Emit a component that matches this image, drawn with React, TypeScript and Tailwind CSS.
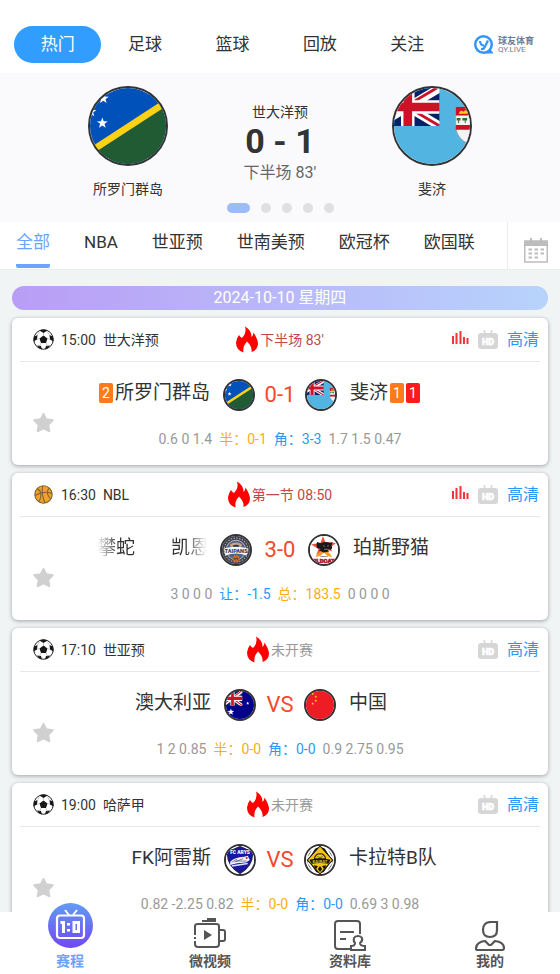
import { ReactNode, useState } from "react";
import clsx from "clsx";

interface Match {
    id: number;
    sport: "football" | "basketball";
    time: string;
    league: string;
    status: string;
    live: boolean;
    home: ReactNode;
    homeLogo: ReactNode;
    away: ReactNode;
    awayLogo: ReactNode;
    score: string;
    scoreWidth: string;
    odds: { text: string; color: string }[];
}

const GREY = "text-[#999]";
const ORANGE = "text-[#faad14]";
const BLUE = "text-[#2b98f5]";

function starPoints(cx: number, cy: number, r: number): string {
    return Array.from({ length: 10 }, (_, i) => {
        const radius = i % 2 === 0 ? r : r * 0.4;
        const angle = (Math.PI / 5) * i - Math.PI / 2;
        return `${(cx + radius * Math.cos(angle)).toFixed(2)},${(cy + radius * Math.sin(angle)).toFixed(2)}`;
    }).join(" ");
}

function UnionJack({ x, width, height }: { x: number; width: number; height: number }) {
    return (
        <svg x={x} y={0} width={width} height={height} viewBox="0 0 66 40" preserveAspectRatio="none">
            <rect width="66" height="40" fill="#012169" />
            <path d="M0 0L66 40M66 0L0 40" stroke="#fff" strokeWidth="9" />
            <path d="M0 2L30 20M33 18L63 0M36 22L66 40M0 38L30 20" stroke="#ce1126" strokeWidth="3" />
            <path d="M33 0V40M0 20H66" stroke="#fff" strokeWidth="14" />
            <path d="M33 0V40M0 20H66" stroke="#ce1126" strokeWidth="9" />
        </svg>
    );
}

function SolomonFlag() {
    return (
        <svg viewBox="0 0 80 80" className="size-full">
            <rect width="80" height="80" fill="#0051ba" />
            <path d="M0 66L80 16V80H0Z" fill="#215b33" />
            <path d="M0 67L80 15" stroke="#fcd116" strokeWidth="7" />
            <polygon points={starPoints(13, 37, 6)} fill="#fff" />
            <polygon points={starPoints(14, 11, 6)} fill="#fff" />
            <polygon points={starPoints(1, 25, 6)} fill="#fff" />
        </svg>
    );
}

function FijiFlag() {
    return (
        <svg viewBox="0 0 80 80" className="size-full">
            <rect width="80" height="80" fill="#52b5e1" />
            <UnionJack x={-19} width={67} height={40} />
            <path d="M65 20H92V42Q90 54 79 59Q67 54 65 42Z" fill="#f4f4f4" stroke="#999" strokeWidth="0.6" />
            <path d="M65 20H92V29H65Z" fill="#ce1126" />
            <path d="M65 39H92V44H65Z" fill="#ce1126" />
            <path d="M68 27Q70 22 73 25Q76 21 78 27Z" fill="#fcd116" />
            <path d="M66 33H70M72 33H77" stroke="#2d6b35" strokeWidth="2.6" />
            <path d="M68 34V37M75 34V37" stroke="#61482a" strokeWidth="1" />
        </svg>
    );
}

function AustraliaFlag() {
    return (
        <svg viewBox="0 0 80 80" className="size-full">
            <rect width="80" height="80" fill="#00008b" />
            <UnionJack x={-10} width={57} height={42} />
            <polygon points={starPoints(14, 60, 10)} fill="#fff" />
            <polygon points={starPoints(62, 35, 5)} fill="#fff" />
        </svg>
    );
}

function ChinaFlag() {
    return (
        <svg viewBox="0 0 80 80" className="size-full">
            <rect width="80" height="80" fill="#ee1c25" />
            <polygon points={starPoints(19, 8, 4)} fill="#ff0" />
            <polygon points={starPoints(28, 16, 4)} fill="#ff0" />
            <polygon points={starPoints(28, 28, 4)} fill="#ff0" />
            <polygon points={starPoints(19, 36, 4)} fill="#ff0" />
        </svg>
    );
}

function TaipansCrest() {
    return (
        <svg viewBox="0 0 80 80" className="size-full">
            <rect width="80" height="80" fill="#41414e" />
            <circle cx="40" cy="40" r="34" fill="none" stroke="#b9b3ac" strokeWidth="3" strokeDasharray="4 4" />
            <circle cx="40" cy="40" r="28" fill="#50638c" stroke="#e6e2dd" strokeWidth="2" />
            <path d="M22 25Q40 12 58 25L53 34Q40 23 27 34Z" fill="#c9a67c" />
            <path d="M30 28Q40 22 50 28L44 33H36Z" fill="#2b2f45" />
            <path d="M5 36Q40 26 75 36L70 56Q40 44 10 56Z" fill="#f8f6f4" />
            <text x="40" y="48" textAnchor="middle" fontSize="16" fontWeight="900" fill="#3f4157" fontFamily="Roboto, sans-serif">TAIPANS</text>
            <circle cx="40" cy="65" r="10" fill="#ee8427" />
            <path d="M30 65H50M40 55V75M33 58Q40 65 33 72M47 58Q40 65 47 72" stroke="#4a3025" strokeWidth="1.8" fill="none" />
        </svg>
    );
}

function WildcatsCrest() {
    return (
        <svg viewBox="0 0 80 80" className="size-full">
            <rect width="80" height="80" fill="#fff" />
            <path d="M37 0L44 17L74 20L57 34L64 44L42 37L18 55L24 37L3 24L30 19Z" fill="#ee5340" />
            <path d="M16 60Q24 44 39 39Q55 43 63 60L50 57L40 47L29 57Z" fill="#f59a28" />
            <path d="M20 17L31 21Q43 14 56 19L65 18L61 27Q66 33 60 39L49 37L55 44L39 47L25 41L31 37L20 34Q17 26 20 17Z" fill="#191919" />
            <path d="M37 28L42 29M49 29L54 28M40 38H50" stroke="#ddd" strokeWidth="1.4" />
            <text x="40" y="60" textAnchor="middle" fontSize="7" fontWeight="700" fill="#222" fontFamily="Roboto, sans-serif">PERTH</text>
            <text x="40" y="76" textAnchor="middle" fontSize="17" fontWeight="900" fill="#17171a" stroke="#b9202c" strokeWidth="1.6" fontFamily="Roboto, sans-serif">WILDCATS</text>
        </svg>
    );
}

function ArysCrest() {
    return (
        <svg viewBox="0 0 80 80" className="size-full">
            <rect width="80" height="80" fill="#fff" />
            <path d="M5 14Q22 12 40 2Q58 12 75 14Q80 54 40 78Q0 54 5 14Z" fill="#1717a5" stroke="#20205c" strokeWidth="4" />
            <text x="40" y="24" textAnchor="middle" fontSize="14" fontWeight="900" fill="#fff" fontFamily="Roboto, sans-serif">FC ARYS</text>
            <path d="M12 45Q24 32 52 31L62 28L68 40L57 47L32 49L12 54Z" fill="#f7f7fb" />
            <path d="M16 47L32 37M24 46L49 36M28 43H59" stroke="#474767" strokeWidth="2" />
            <circle cx="59" cy="34" r="3" fill="#dc2433" />
            <path d="M16 55L62 48V52L18 59Z" fill="#dfe2f4" />
        </svg>
    );
}

function KairatCrest() {
    return (
        <svg viewBox="0 0 80 80" className="size-full">
            <rect width="80" height="80" fill="#fff" />
            <circle cx="40" cy="40" r="36" fill="#17150e" />
            <path d="M4 38L26 2M76 38L54 2M6 46L27 77M74 46L53 77" stroke="#fff" strokeWidth="6" />
            <path d="M40 0L76 40L40 80L4 40Z" fill="#f3c51b" stroke="#191710" strokeWidth="3" />
            <path d="M24 37Q26 22 40 22Q54 22 56 37Z" fill="#f3c51b" stroke="#1b180d" strokeWidth="3" />
            <path d="M33 29L37 33M47 29L43 33M36 37L40 32L44 37" stroke="#1b180d" strokeWidth="2" fill="none" />
            <path d="M10 39Q40 33 70 39L64 51Q40 46 16 51Z" fill="#17150e" />
            <text x="40" y="49" textAnchor="middle" fontSize="12" fontWeight="900" fill="#d9b42b" fontFamily="Roboto, sans-serif">KAIRAT</text>
            <path d="M22 55L34 57L28 67ZM58 55L46 57L52 67ZM40 57L46 66L40 74L34 66Z" fill="#17150e" />
        </svg>
    );
}

function FootballIcon() {
    return (
        <svg viewBox="0 0 42 42" className="size-[21px]">
            <circle cx="21" cy="21" r="19.5" fill="#fff" stroke="#222" strokeWidth="2" />
            <path d="M21 13L29 19L26 28H16L13 19Z" fill="#171717" />
            <path d="M13 3Q21-1 29 3L21 8ZM2 15L9 12L8 21L1 25ZM40 15L33 12L34 21L41 25ZM8 33L16 34L18 41Q11 39 8 33ZM34 33L26 34L24 41Q31 39 34 33Z" fill="#171717" />
            <path d="M21 8V13M8 21L13 19M34 21L29 19M16 28L13 35M26 28L29 35M9 12L14 5M33 12L28 5" stroke="#999" strokeWidth="1" />
        </svg>
    );
}

function BasketballIcon() {
    return (
        <svg viewBox="0 0 36 36" className="mx-px size-[19px]" fill="none" stroke="#7a6237" strokeWidth="2">
            <circle cx="18" cy="18" r="16.5" fill="#f0a127" />
            <path d="M2 20Q18 10 34 16M16 2Q14 20 21 34M6 7Q18 12 10 31M29 6Q20 14 32 27" />
        </svg>
    );
}

function FlameIcon() {
    return (
        <svg viewBox="0 0 44 54" className="h-[27px] w-[22px]" fill="#f00">
            <path d="M18 1Q31 8 31 22Q35 19 35 13Q44 27 44 36Q43 48 31 52Q33 42 22 31Q13 40 15 53Q0 48 0 33Q1 24 6 18Q8 22 12 24Q22 14 18 1Z" />
        </svg>
    );
}

function StarIcon() {
    return (
        <svg viewBox="0 0 40 40" className="size-[21px]" fill="#d0d0d0" stroke="#d0d0d0" strokeWidth="3" strokeLinejoin="round">
            <path d="M20 3L25.5 13.5L38 15.5L29.5 24.5L31.5 37L20 31.5L8.5 37L10.5 24.5L2 15.5L14.5 13.5Z" />
        </svg>
    );
}

function BarsIcon() {
    return (
        <svg viewBox="0 0 18 18" className="size-[18px]">
            <rect width="18" height="18" fill="#f8f9fb" />
            <path d="M2 5V13M5.5 2V13M9.500 0V13M13 6V13M16.500 7V13" stroke="#f5333b" strokeWidth="2" />
        </svg>
    );
}

function HdIcon() {
    return (
        <svg viewBox="0 0 20 20" className="size-5">
            <path d="M6 0L7 4M14 0L13 4" stroke="#d6d6d6" strokeWidth="1.5" />
            <rect y="3" width="20" height="16" rx="3" fill="#d6d6d6" />
            <text x="10" y="14.5" textAnchor="middle" fontSize="9" fontWeight="900" fill="#fff" stroke="#fff" strokeWidth="0.6" fontFamily="Roboto, sans-serif">HD</text>
        </svg>
    );
}

function CalendarIcon() {
    return (
        <svg viewBox="0 0 24 25" className="h-[25px] w-6" fill="none" stroke="#bdbdbd">
            <rect x="0.75" y="3" width="22.5" height="21" strokeWidth="1.5" />
            <path d="M0 5.5H24" strokeWidth="5" />
            <path d="M7 0V4M17 0V4" strokeWidth="2" />
            <path d="M4.5 11.5H8M10.5 11.5H14M16.5 11.5H20M4.5 15.5H8M10.5 15.5H14M16.5 15.5H20M4.5 19.5H8M10.5 19.5H14" strokeWidth="1.8" />
        </svg>
    );
}

function BrandMark() {
    return (
        <svg viewBox="0 0 40 40" className="size-5" fill="none">
            <circle cx="19" cy="19" r="16.5" stroke="#3196fb" strokeWidth="5" />
            <path d="M19 37H39L33 28Q29 35 19 35Z" fill="#3196fb" />
            <path d="M12 12Q13 21 20 21M28 11L21 25Q19 29 14 28" stroke="#3196fb" strokeWidth="4.5" />
        </svg>
    );
}

function ScheduleIcon() {
    return (
        <svg viewBox="0 0 45 45" className="size-[45px]">
            <defs>
                <linearGradient id="schedule" x1="0" y1="0" x2="0" y2="1">
                    <stop offset="0" stopColor="#629cf3" />
                    <stop offset="1" stopColor="#7147f2" />
                </linearGradient>
            </defs>
            <circle cx="22.5" cy="22.5" r="22.5" fill="url(#schedule)" />
            <path d="M17 7L21 12M29 7L25 12" stroke="#fff" strokeWidth="2" />
            <rect x="9" y="12.5" width="27" height="22.5" rx="3" fill="none" stroke="#fff" strokeWidth="2.2" />
            <path d="M12.5 19.5H15.5V30M20.5 20V22.500M20.5 26V28.500M26 19.500H30.500V28.500H26Z" fill="none" stroke="#fff" strokeWidth="3" />
        </svg>
    );
}

function VideoIcon() {
    return (
        <svg viewBox="0 0 32 30" className="h-[30px] w-8" fill="none" stroke="#555" strokeWidth="2">
            <path d="M1 17V8Q1 6 4 6H22Q25 6 25 8V26Q25 29 22 29H4Q1 29 1 26V23M1 19V21" />
            <path d="M26 12H29Q31 12 31 14V21Q31 23 29 23H26" />
            <path d="M8 3H13" strokeWidth="2" />
            <path d="M13 2H22" strokeWidth="4" />
            <path d="M10 12L18 17L10 22Z" fill="#555" stroke="none" />
        </svg>
    );
}

function LibraryIcon() {
    return (
        <svg viewBox="0 0 32 31" className="h-[31px] w-8" fill="none" stroke="#555" strokeWidth="2">
            <path d="M16 29H4Q1 29 1 26V4Q1 1 4 1H23Q26 1 26 4V14M6 12H20M6 19H12" />
            <path d="M17 30V26Q21 26 21 23Q19 21 20 18Q21 16 24 16Q27 16 28 18Q29 21 26 23Q26 26 31 26V30Z" />
        </svg>
    );
}

function MineIcon() {
    return (
        <svg viewBox="0 0 30 30" className="size-[30px]" fill="none" stroke="#555" strokeWidth="2.2">
            <path d="M22 1V9Q22 16 15 16Q8 16 8 9Q8 1 16 1Z" />
            <path d="M10 20Q1 21 1 28Q1 29 3 29H27Q29 29 29 27Q29 21 20 20L16 24L14 24Z" />
        </svg>
    );
}

function CircleLogo({ size, children }: { size: string; children: ReactNode }) {
    return <div className={clsx("shrink-0 overflow-hidden rounded-full border-2 border-[#333]", size)}>{children}</div>;
}

function CardBadge({ color, children }: { color: string; children: ReactNode }) {
    return <span className={clsx("h-5 w-[14px] rounded-xs text-center text-sm leading-5 text-white", color)}>{children}</span>;
}

const matches: Match[] = [
    {
        id: 1,
        sport: "football",
        time: "15:00",
        league: "世大洋预",
        status: "下半场 83'",
        live: true,
        home: <><CardBadge color="bg-[#ff7a1a]">2</CardBadge><span>所罗门群岛</span></>,
        homeLogo: <SolomonFlag />,
        away: <><span>斐济</span><CardBadge color="bg-[#ff7a1a]">1</CardBadge><CardBadge color="bg-[#fd1a1a]">1</CardBadge></>,
        awayLogo: <FijiFlag />,
        score: "0-1",
        scoreWidth: "w-[50px]",
        odds: [
            { text: "0.6 0 1.4", color: GREY },
            { text: "半：0-1", color: ORANGE },
            { text: "角：3-3", color: BLUE },
            { text: "1.7 1.5 0.47", color: GREY },
        ],
    },
    {
        id: 2,
        sport: "basketball",
        time: "16:30",
        league: "NBL",
        status: "第一节 08:50",
        live: true,
        home: (
            <span className="flex w-[110px] gap-9 overflow-hidden whitespace-nowrap mask-[linear-gradient(90deg,transparent,#000_20%,#000_80%,transparent)]">
                <span>攀蛇</span>
                <span>凯恩</span>
            </span>
        ),
        homeLogo: <TaipansCrest />,
        away: <span>珀斯野猫</span>,
        awayLogo: <WildcatsCrest />,
        score: "3-0",
        scoreWidth: "w-14",
        odds: [
            { text: "3 0 0 0", color: GREY },
            { text: "让：-1.5", color: BLUE },
            { text: "总：183.5", color: ORANGE },
            { text: "0 0 0 0", color: GREY },
        ],
    },
    {
        id: 3,
        sport: "football",
        time: "17:10",
        league: "世亚预",
        status: "未开赛",
        live: false,
        home: <span>澳大利亚</span>,
        homeLogo: <AustraliaFlag />,
        away: <span>中国</span>,
        awayLogo: <ChinaFlag />,
        score: "VS",
        scoreWidth: "w-12",
        odds: [
            { text: "1 2 0.85", color: GREY },
            { text: "半：0-0", color: ORANGE },
            { text: "角：0-0", color: BLUE },
            { text: "0.9 2.75 0.95", color: GREY },
        ],
    },
    {
        id: 4,
        sport: "football",
        time: "19:00",
        league: "哈萨甲",
        status: "未开赛",
        live: false,
        home: <span>FK阿雷斯</span>,
        homeLogo: <ArysCrest />,
        away: <span>卡拉特B队</span>,
        awayLogo: <KairatCrest />,
        score: "VS",
        scoreWidth: "w-12",
        odds: [
            { text: "0.82 -2.25 0.82", color: GREY },
            { text: "半：0-0", color: ORANGE },
            { text: "角：0-0", color: BLUE },
            { text: "0.69 3 0.98", color: GREY },
        ],
    },
];

function MatchCard({ match }: { match: Match }) {
    return (
        <article className="rounded-md bg-white px-2 pb-4 shadow-[0_1px_4px_rgba(0,0,0,0.35)]">
            <div className="grid h-11 grid-cols-[1fr_auto_1fr] items-center border-b border-[#e8e8e8] text-sm">
                <div className="flex items-center gap-[7px] pl-[13px]">
                    {match.sport === "football" ? <FootballIcon /> : <BasketballIcon />}
                    <span>{match.time}</span>
                    <span>{match.league}</span>
                </div>
                <div className={clsx("flex items-center gap-0.5", match.live ? "text-[#c04848]" : "text-[#999]")}>
                    <FlameIcon />
                    <span>{match.status}</span>
                </div>
                <div className="flex items-center justify-end gap-[9px] pr-px">
                    {match.live && <BarsIcon />}
                    <HdIcon />
                    <a href="#hd" className="text-base text-[#2b98f5]">高清</a>
                </div>
            </div>
            <div className="grid grid-cols-[46px_1fr_46px]">
                <button type="button" aria-label="收藏" className="flex justify-center self-end pb-4">
                    <StarIcon />
                </button>
                <div>
                    <div className="mt-[17px] grid grid-cols-[1fr_auto_1fr] items-center text-[19px] leading-7">
                        <div className="flex items-center justify-end gap-0.5 pr-[13px] pb-1">{match.home}</div>
                        <div className="flex items-center">
                            <CircleLogo size="size-8">{match.homeLogo}</CircleLogo>
                            <span className={clsx("text-center text-[22px] text-[#f5482d]", match.scoreWidth)}>{match.score}</span>
                            <CircleLogo size="size-8">{match.awayLogo}</CircleLogo>
                        </div>
                        <div className="flex items-center gap-0.5 pb-1 pl-[13px]">{match.away}</div>
                    </div>
                    <div className="mt-[18px] flex justify-center gap-[7px] text-sm leading-5 whitespace-nowrap">
                        {match.odds.map((odd, index) => (
                            <span key={index} className={odd.color}>{odd.text}</span>
                        ))}
                    </div>
                </div>
            </div>
        </article>
    );
}

const topTabs = ["热门", "足球", "篮球", "回放", "关注"];
const leagues = ["全部", "NBA", "世亚预", "世南美预", "欧冠杯", "欧国联"];
const navItems = [
    { label: "赛程", icon: <ScheduleIcon />, gap: "mb-1" },
    { label: "微视频", icon: <VideoIcon />, gap: "mb-1" },
    { label: "资料库", icon: <LibraryIcon />, gap: "mb-px" },
    { label: "我的", icon: <MineIcon />, gap: "mb-px" },
];

export default function App() {
    const [topTab, setTopTab] = useState<string>("热门");
    const [league, setLeague] = useState<string>("全部");
    const [page, setPage] = useState<string>("赛程");

    return (
        <div className="flex h-screen flex-col bg-[#f1f4f5] font-[Roboto,'Noto_Sans_CJK_SC',sans-serif] text-[#333]">
            <header className="flex items-center bg-white pt-[26px] pr-[26px] pb-[10px] pl-[14px]">
                <nav className="grid flex-1 grid-cols-5">
                    {topTabs.map((tab) => (
                        <button
                            key={tab}
                            type="button"
                            onClick={() => setTopTab(tab)}
                            className={clsx("h-[37px] rounded-full text-[17px]", topTab === tab && "bg-[#319dff] text-white")}
                        >
                            {tab}
                        </button>
                    ))}
                </nav>
                <a href="#home" className="ml-[23px] flex items-center gap-1">
                    <BrandMark />
                    <span className="flex flex-col text-[#6f7c96]">
                        <span className="text-[9px] leading-[10px] font-bold">球友体育</span>
                        <span className="text-[8px] leading-[8px]">QY.LIVE</span>
                    </span>
                </a>
            </header>

            <section className="bg-[#fafafc] pt-[13px] pb-2">
                <div className="grid grid-cols-3 px-[52px] text-center">
                    <div className="flex flex-col items-center">
                        <CircleLogo size="size-20"><SolomonFlag /></CircleLogo>
                        <span className="mt-[13px] text-sm leading-5">所罗门群岛</span>
                    </div>
                    <div className="flex flex-col pt-4">
                        <span className="text-sm leading-5">世大洋预</span>
                        <span className="text-[34px] leading-[38px] font-bold">0 - 1</span>
                        <span className="mt-px text-base text-[#666]">下半场 83'</span>
                    </div>
                    <div className="flex flex-col items-center">
                        <CircleLogo size="size-20"><FijiFlag /></CircleLogo>
                        <span className="mt-[13px] text-sm leading-5">斐济</span>
                    </div>
                </div>
                <div className="mt-1 mb-px flex justify-center gap-[11px]">
                    <span className="h-[10px] w-[23px] rounded-full bg-[#9bbcf7]" />
                    {[2, 3, 4, 5].map((dot) => (
                        <span key={dot} className="size-[10px] rounded-full bg-[#e0e0e2]" />
                    ))}
                </div>
            </section>

            <div className="flex h-12 border-b border-[#ececec] bg-white">
                <nav className="flex flex-1 gap-[34px] overflow-hidden pl-4 whitespace-nowrap">
                    {leagues.map((name) => (
                        <button
                            key={name}
                            type="button"
                            onClick={() => setLeague(name)}
                            className={clsx(
                                "h-[46px] rounded-xs border-b-4 text-[17px]",
                                league === name ? "border-[#6ca4fb] text-[#6ca4fb]" : "border-transparent",
                            )}
                        >
                            {name}
                        </button>
                    ))}
                </nav>
                <button type="button" aria-label="日历" className="flex w-[53px] items-end justify-center border-l border-[#ececec] pb-[6px] pl-1">
                    <CalendarIcon />
                </button>
            </div>

            <main className="min-h-0 flex-1 overflow-y-auto px-3 pt-4 [scrollbar-width:none]">
                <h2 className="h-6 rounded-full bg-linear-to-r from-[#b99df5] to-[#b7d3fc] text-center text-base leading-6 text-white">
                    2024-10-10 星期四
                </h2>
                <div className="mt-2 flex flex-col gap-2 pb-4">
                    {matches.map((match) => (
                        <MatchCard key={match.id} match={match} />
                    ))}
                </div>
            </main>

            <nav className="relative grid h-[62px] grid-cols-4 grid-rows-1 bg-white">
                {navItems.map((item) => (
                    <button
                        key={item.label}
                        type="button"
                        onClick={() => setPage(item.label)}
                        className={clsx(
                            "flex flex-col items-center justify-end pb-1 text-sm leading-[18px] font-bold",
                            page === item.label ? "text-[#6ca4fb]" : "text-[#555]",
                        )}
                    >
                        <span className={item.gap}>{item.icon}</span>
                        <span>{item.label}</span>
                    </button>
                ))}
            </nav>
        </div>
    );
}
